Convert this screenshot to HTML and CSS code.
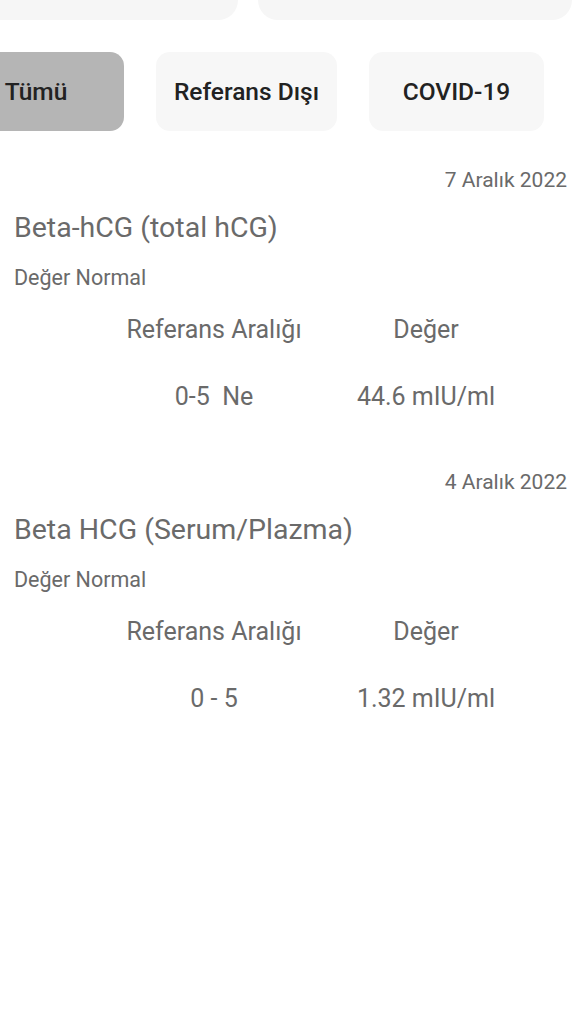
FILE: index.html
```html
<!DOCTYPE html>
<html lang="tr">
<head>
<meta charset="utf-8">
<link rel="stylesheet" href="styles.css">
</head>
<body>
<div class="top-row">
  <div class="top-box top-left"></div>
  <div class="top-box top-right"></div>
</div>
<div class="chips">
  <div class="chip chip-active">Tümü</div>
  <div class="chip chip-ref">Referans Dışı</div>
  <div class="chip chip-covid">COVID-19</div>
</div>
<div class="card">
  <div class="date">7 Aralık 2022</div>
  <div class="title">Beta-hCG (total hCG)</div>
  <div class="status">Değer Normal</div>
  <div class="grid">
    <span class="h">Referans Aralığı</span><span class="h">Değer</span>
    <span class="v">0-5&nbsp; Ne</span><span class="v">44.6 mIU/ml</span>
  </div>
</div>
<div class="card card-next">
  <div class="date">4 Aralık 2022</div>
  <div class="title">Beta HCG (Serum/Plazma)</div>
  <div class="status">Değer Normal</div>
  <div class="grid">
    <span class="h">Referans Aralığı</span><span class="h">Değer</span>
    <span class="v">0 - 5</span><span class="v">1.32 mIU/ml</span>
  </div>
</div>
</body>
</html>
```
FILE: styles.css
```css
* { box-sizing: border-box; }
html, body {
  margin: 0;
  padding: 0;
  background: #ffffff;
  font-family: Roboto, "Noto Sans", "Liberation Sans", sans-serif;
  overflow: hidden;
}
body { width: 576px; height: 1024px; }

.top-row {
  display: flex;
  gap: 20px;
  height: 20px;
  padding-right: 4px;
}
.top-box {
  background: #f6f6f6;
  height: 20px;
  border-radius: 0 0 22px 22px;
}
.top-left { width: 238px; border-bottom-left-radius: 0; }
.top-right { flex: 1; }

.chips {
  display: flex;
  gap: 32px;
  margin-top: 32px;
  margin-left: -52px;
  height: 79px;
}
.chip {
  height: 79px;
  border-radius: 14px;
  background: #f7f7f7;
  display: flex;
  align-items: center;
  justify-content: center;
  font-size: 24.5px;
  font-weight: 500;
  color: #222222;
  flex: none;
}
.chip-active { background: #b5b5b5; width: 176px; }
.chip-ref { width: 181px; }
.chip-covid { width: 175px; }

.card {
  padding: 37px 9px 23px 14px;
  color: #6a6a6a;
}
.card-next { padding-top: 36px; }
.date {
  text-align: right;
  font-size: 21px;
  line-height: 24px;
}
.title {
  margin-top: 20px;
  font-size: 28.5px;
  line-height: 32px;
}
.status {
  margin-top: 22px;
  font-size: 21.5px;
  line-height: 24px;
}
.grid {
  display: grid;
  grid-template-columns: 200px 200px;
  column-gap: 12px;
  padding-left: 100px;
  margin-top: 26px;
  row-gap: 39px;
  font-size: 25px;
  line-height: 28px;
  text-align: center;
}
```
